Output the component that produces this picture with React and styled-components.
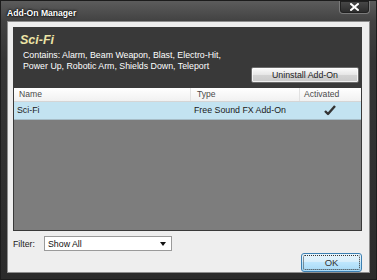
import React from "react";
import styled, { createGlobalStyle } from "styled-components";

const Global = createGlobalStyle`
  html, body { margin: 0; padding: 0; background: #2e2e2e; }
  body { font-family: "Liberation Sans", Arial, sans-serif; }
`;

const Window = styled.div`
  width: 377px;
  height: 280px;
  box-sizing: border-box;
  display: flex;
  flex-direction: column;
  background: linear-gradient(180deg, #5c5c5c 0px, #424242 20px, #353535 60px, #2b2b2b 100%);
  border: 1px solid #1c1c1c;
`;

const TitleBar = styled.div`
  height: 20px;
  display: flex;
  align-items: flex-start;
  justify-content: space-between;
  padding-left: 6px;
`;

const Title = styled.div`
  color: #ffffff;
  font-weight: bold;
  font-size: 8.6px;
  line-height: 10px;
  margin-top: 7px;
  text-shadow: 0 0 3px #000, 0 0 2px #000;
`;

const CloseButton = styled.div`
  width: 31px;
  height: 13px;
  margin-right: 6px;
  box-sizing: border-box;
  border: 1px solid #7a7a7a;
  border-top: none;
  border-radius: 0 0 4px 4px;
  background: linear-gradient(180deg, #4a4a4a, #2a2a2a);
  display: flex;
  align-items: center;
  justify-content: center;
  box-shadow: inset 0 0 0 1px #202020;
`;

const Client = styled.div`
  flex: 1;
  margin: 0 6px 6px 6px;
  background: #eeeeee;
  border: 1px solid #8d8d8d;
  display: flex;
  flex-direction: column;
  padding: 5px 7px 0 5px;
`;

const Panel = styled.div`
  height: 204px;
  background: #393939;
  display: flex;
  flex-direction: column;
  padding: 0 1px 1px 1px;
  box-sizing: border-box;
`;

const PanelHeader = styled.div`
  height: 61px;
  display: flex;
  justify-content: space-between;
  align-items: flex-end;
  padding: 0 2px 5px 6px;
  box-sizing: border-box;
`;

const Info = styled.div`
  align-self: flex-start;
  padding-top: 5px;
`;

const PackName = styled.div`
  color: #ece4a6;
  font-weight: bold;
  font-style: italic;
  font-size: 12.5px;
  line-height: 17px;
`;

const Contains = styled.div`
  color: #ffffff;
  font-size: 8.8px;
  line-height: 11px;
  margin-left: 3px;
  margin-top: 1px;
`;

const SilverButton = styled.div`
  width: 108px;
  height: 16px;
  box-sizing: border-box;
  border: 1px solid #6b6b6b;
  border-radius: 2px;
  background: linear-gradient(180deg, #fbfbfb 0%, #e6e6e6 48%, #d3d3d3 52%, #c9c9c9 100%);
  box-shadow: inset 0 0 0 1px rgba(255,255,255,0.7);
  color: #222;
  font-size: 8.8px;
  line-height: 14px;
  text-align: center;
`;

const List = styled.div`
  flex: 1;
  background: #7d7d7d;
  display: flex;
  flex-direction: column;
`;

const cols = "176px 109px 1fr";

const HeaderRow = styled.div`
  height: 14px;
  display: grid;
  grid-template-columns: ${cols};
  background: linear-gradient(180deg, #ffffff, #f1f1f1);
  border-bottom: 1px solid #d5d5d5;
  box-sizing: border-box;
`;

const HeaderCell = styled.div`
  color: #4a4a4a;
  font-size: 8.6px;
  line-height: 13px;
  padding-left: ${(p) => p.$pad}px;
  border-left: ${(p) => (p.$first ? "none" : "1px solid #e2e2e2")};
`;

const Row = styled.div`
  height: 18px;
  display: grid;
  grid-template-columns: ${cols};
  background: ${(p) => (p.$selected ? "#c3e3f1" : "transparent")};
  border-bottom: 1px solid #a7bcc6;
  box-sizing: border-box;
`;

const Cell = styled.div`
  color: #1a1a1a;
  font-size: 8.8px;
  line-height: 17px;
  padding-left: ${(p) => p.$pad}px;
  display: flex;
  align-items: center;
  justify-content: ${(p) => (p.$center ? "center" : "flex-start")};
`;

const FilterRow = styled.div`
  display: flex;
  align-items: center;
  margin-top: 5px;
  height: 15px;
`;

const Label = styled.div`
  color: #222;
  font-size: 8.8px;
  width: 31px;
  margin-left: 0px;
`;

const Select = styled.div`
  width: 128px;
  height: 15px;
  box-sizing: border-box;
  border: 1px solid #9a9a9a;
  background: #ffffff;
  display: flex;
  align-items: center;
  justify-content: space-between;
  padding: 0 5px 0 3px;
  font-size: 8.8px;
  color: #111;
`;

const ButtonRow = styled.div`
  display: flex;
  justify-content: flex-end;
  margin-top: 2px;
`;

const OkButton = styled.div`
  width: 61px;
  height: 19px;
  box-sizing: border-box;
  border: 1px solid #3c7fb1;
  border-radius: 3px;
  background: linear-gradient(180deg, #e8f5fc 0%, #d7eefb 45%, #bde6fd 50%, #a7d9f5 100%);
  display: flex;
  align-items: center;
  justify-content: center;
  padding: 1px;
`;

const Focus = styled.div`
  width: 100%;
  height: 100%;
  box-sizing: border-box;
  border: 1px dotted #333;
  border-radius: 2px;
  display: flex;
  align-items: center;
  justify-content: center;
  color: #333;
  font-size: 9.5px;
`;

export default function App() {
  return (
    <>
      <Global />
      <Window>
        <TitleBar>
          <Title>Add-On Manager</Title>
          <CloseButton>
            <svg width="9" height="8" viewBox="0 0 9 8">
              <path d="M1 1 L8 7 M8 1 L1 7" stroke="#fff" strokeWidth="2" strokeLinecap="square" />
            </svg>
          </CloseButton>
        </TitleBar>
        <Client>
          <Panel>
            <PanelHeader>
              <Info>
                <PackName>Sci-Fi</PackName>
                <Contains>
                  Contains: Alarm, Beam Weapon, Blast, Electro-Hit,
                  <br />
                  Power Up, Robotic Arm, Shields Down, Teleport
                </Contains>
              </Info>
              <SilverButton>Uninstall Add-On</SilverButton>
            </PanelHeader>
            <List>
              <HeaderRow>
                <HeaderCell $first $pad={5}>Name</HeaderCell>
                <HeaderCell $pad={6}>Type</HeaderCell>
                <HeaderCell $pad={4}>Activated</HeaderCell>
              </HeaderRow>
              <Row $selected>
                <Cell $pad={3}>Sci-Fi</Cell>
                <Cell $pad={4}>Free Sound FX Add-On</Cell>
                <Cell $center>
                  <svg width="12" height="11" viewBox="0 0 12 11">
                    <path d="M1 6 L4 9 L11 1" fill="none" stroke="#333" strokeWidth="2.4" strokeLinejoin="round" />
                  </svg>
                </Cell>
              </Row>
            </List>
          </Panel>
          <FilterRow>
            <Label>Filter:</Label>
            <Select>
              <span>Show All</span>
              <svg width="6" height="4" viewBox="0 0 6 4">
                <path d="M0 0 H6 L3 4 Z" fill="#111" />
              </svg>
            </Select>
          </FilterRow>
          <ButtonRow>
            <OkButton>
              <Focus>OK</Focus>
            </OkButton>
          </ButtonRow>
        </Client>
      </Window>
    </>
  );
}
